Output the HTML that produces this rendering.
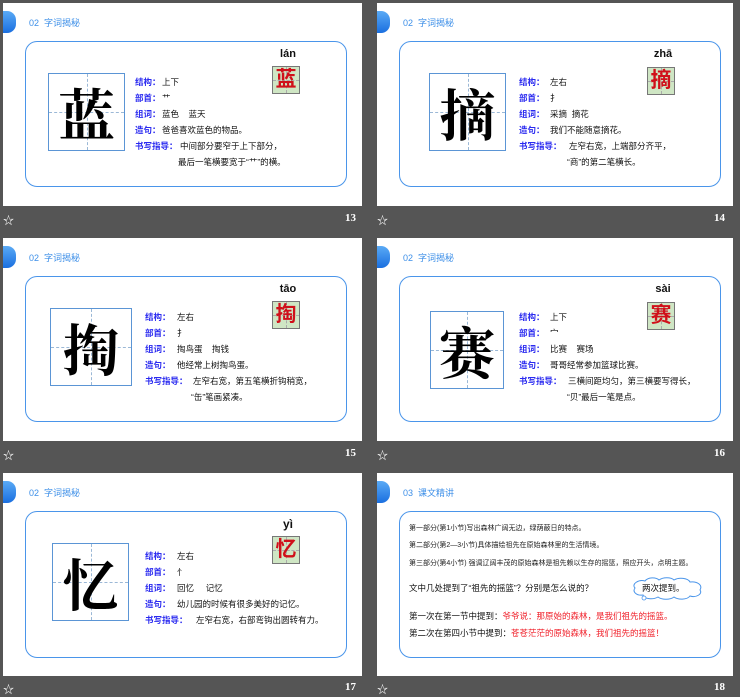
<!DOCTYPE html>
<html><head><meta charset="utf-8"><style>
*{margin:0;padding:0;box-sizing:border-box}
body{width:740px;height:696px;background:#555;position:relative;overflow:hidden;font-family:"Liberation Sans","Noto Sans CJK SC",sans-serif}
.s{position:absolute;width:359px;height:203px;background:#fff}
.tab{position:absolute;left:0;top:8px;width:13px;height:22px;background:linear-gradient(180deg,#5aaaf5,#1a6fe0);border-radius:0 9px 9px 0}
.ttl{position:absolute;left:26px;top:13px;font-size:9px;color:#3d8fe8;white-space:nowrap}
.box{position:absolute;left:22px;top:38px;width:322px;height:146px;border:1.5px solid #4a95ea;border-radius:12px}
.big{position:absolute;width:77px;height:78px;border:1.5px solid #5b95d5;background:#fff}
.big:before{content:"";position:absolute;left:50%;top:0;bottom:0;border-left:1px dashed #9bb8d6}
.big:after{content:"";position:absolute;top:50%;left:0;right:0;border-top:1px dashed #9bb8d6}
.big span{position:absolute;left:0;right:0;top:6px;text-align:center;font-family:"Noto Serif CJK SC",serif;font-weight:bold;font-size:56px;line-height:66px;color:#000;z-index:1}
.py{position:absolute;width:40px;text-align:center;font-weight:bold;font-size:11px;color:#111}
.sm{position:absolute;width:28px;height:28px;background:#cfe6c4;border:1px solid #777;text-align:center;color:#d0101a;font-size:21px;line-height:26px}
.sm:before{content:"";position:absolute;left:50%;top:0;bottom:0;border-left:1px dashed #aaa}
.sm:after{content:"";position:absolute;top:50%;left:0;right:0;border-top:1px dashed #aaa}
.sm b{position:relative;z-index:1;font-weight:bold}
.ln{position:absolute;font-size:8.5px;color:#111;white-space:nowrap;line-height:10px}
.lb{position:absolute;font-size:8.5px;color:#2a2af0;font-weight:bold;white-space:nowrap;line-height:10px}
.ft{position:absolute;color:#fff;font-size:11px}
.num{position:absolute;color:#fff;font-family:"Liberation Serif",serif;font-weight:bold;font-size:11px;text-align:right;width:30px}
.t{position:absolute;left:32px;font-size:7px;color:#222;white-space:nowrap}
.q{position:absolute;left:32px;font-size:8.5px;color:#111;white-space:nowrap}
.r{color:#f0202a}
</style></head><body>

<div class="s" style="left:3px;top:3px">
<div class="tab"></div><div class="ttl">02&nbsp;&nbsp;字词揭秘</div><div class="box"></div>
<div class="big" style="left:45px;top:70px"><span>蓝</span></div>
<div class="py" style="left:265px;top:45px">lán</div>
<div class="sm" style="left:269px;top:63px"><b>蓝</b></div>
<div class="lb" style="left:132px;top:74px">结构：</div><div class="ln" style="left:159px;top:74px">上下</div>
<div class="lb" style="left:132px;top:90px">部首：</div><div class="ln" style="left:159px;top:90px">艹</div>
<div class="lb" style="left:132px;top:106px">组词：</div><div class="ln" style="left:159px;top:106px">蓝色&nbsp;&nbsp;&nbsp;&nbsp;蓝天</div>
<div class="lb" style="left:132px;top:122px">造句：</div><div class="ln" style="left:159px;top:122px">爸爸喜欢蓝色的物品。</div>
<div class="lb" style="left:132px;top:138px">书写指导：</div><div class="ln" style="left:177px;top:138px">中间部分要窄于上下部分，</div>
<div class="ln" style="left:175px;top:154px">最后一笔横要宽于“艹”的横。</div>
</div>
<div class="ft" style="left:3px;top:212px">☆</div><div class="num" style="left:326px;top:212px">13</div>

<div class="s" style="left:377px;top:3px;width:356px">
<div class="tab"></div><div class="ttl">02&nbsp;&nbsp;字词揭秘</div><div class="box"></div>
<div class="big" style="left:52px;top:70px"><span>摘</span></div>
<div class="py" style="left:266px;top:45px">zhā</div>
<div class="sm" style="left:270px;top:64px"><b>摘</b></div>
<div class="lb" style="left:142px;top:74px">结构：</div><div class="ln" style="left:173px;top:74px">左右</div>
<div class="lb" style="left:142px;top:90px">部首：</div><div class="ln" style="left:173px;top:90px">扌</div>
<div class="lb" style="left:142px;top:106px">组词：</div><div class="ln" style="left:173px;top:106px">采摘&nbsp;&nbsp;摘花</div>
<div class="lb" style="left:142px;top:122px">造句：</div><div class="ln" style="left:173px;top:122px">我们不能随意摘花。</div>
<div class="lb" style="left:142px;top:138px">书写指导：</div><div class="ln" style="left:192px;top:138px">左窄右宽，上端部分齐平，</div>
<div class="ln" style="left:190px;top:154px">“商”的第二笔横长。</div>
</div>
<div class="ft" style="left:377px;top:212px">☆</div><div class="num" style="left:695px;top:212px">14</div>

<div class="s" style="left:3px;top:238px">
<div class="tab"></div><div class="ttl">02&nbsp;&nbsp;字词揭秘</div><div class="box"></div>
<div class="big" style="left:47px;top:70px;width:82px"><span>掏</span></div>
<div class="py" style="left:265px;top:45px">tāo</div>
<div class="sm" style="left:269px;top:63px"><b>掏</b></div>
<div class="lb" style="left:142px;top:74px">结构：</div><div class="ln" style="left:174px;top:74px">左右</div>
<div class="lb" style="left:142px;top:90px">部首：</div><div class="ln" style="left:174px;top:90px">扌</div>
<div class="lb" style="left:142px;top:106px">组词：</div><div class="ln" style="left:174px;top:106px">掏鸟蛋&nbsp;&nbsp;&nbsp;&nbsp;掏钱</div>
<div class="lb" style="left:142px;top:122px">造句：</div><div class="ln" style="left:174px;top:122px">他经常上树掏鸟蛋。</div>
<div class="lb" style="left:142px;top:138px">书写指导：</div><div class="ln" style="left:190px;top:138px">左窄右宽，第五笔横折钩稍宽，</div>
<div class="ln" style="left:188px;top:154px">“缶”笔画紧凑。</div>
</div>
<div class="ft" style="left:3px;top:447px">☆</div><div class="num" style="left:326px;top:447px">15</div>

<div class="s" style="left:377px;top:238px;width:356px">
<div class="tab"></div><div class="ttl">02&nbsp;&nbsp;字词揭秘</div><div class="box"></div>
<div class="big" style="left:53px;top:73px;width:74px"><span>赛</span></div>
<div class="py" style="left:266px;top:45px">sài</div>
<div class="sm" style="left:270px;top:64px"><b>赛</b></div>
<div class="lb" style="left:142px;top:74px">结构：</div><div class="ln" style="left:173px;top:74px">上下</div>
<div class="lb" style="left:142px;top:90px">部首：</div><div class="ln" style="left:173px;top:90px">宀</div>
<div class="lb" style="left:142px;top:106px">组词：</div><div class="ln" style="left:173px;top:106px">比赛&nbsp;&nbsp;&nbsp;&nbsp;赛场</div>
<div class="lb" style="left:142px;top:122px">造句：</div><div class="ln" style="left:173px;top:122px">哥哥经常参加篮球比赛。</div>
<div class="lb" style="left:142px;top:138px">书写指导：</div><div class="ln" style="left:191px;top:138px">三横间距均匀，第三横要写得长，</div>
<div class="ln" style="left:190px;top:154px">“贝”最后一笔是点。</div>
</div>
<div class="ft" style="left:377px;top:447px">☆</div><div class="num" style="left:695px;top:447px">16</div>

<div class="s" style="left:3px;top:473px">
<div class="tab"></div><div class="ttl">02&nbsp;&nbsp;字词揭秘</div><div class="box" style="top:38px;height:147px"></div>
<div class="big" style="left:49px;top:70px"><span>忆</span></div>
<div class="py" style="left:265px;top:44px;font-size:12px">yì</div>
<div class="sm" style="left:269px;top:63px"><b>忆</b></div>
<div class="lb" style="left:142px;top:78px">结构：</div><div class="ln" style="left:174px;top:78px">左右</div>
<div class="lb" style="left:142px;top:94px">部首：</div><div class="ln" style="left:174px;top:94px">忄</div>
<div class="lb" style="left:142px;top:110px">组词：</div><div class="ln" style="left:174px;top:110px">回忆&nbsp;&nbsp;&nbsp;&nbsp;&nbsp;记忆</div>
<div class="lb" style="left:142px;top:126px">造句：</div><div class="ln" style="left:174px;top:126px">幼儿园的时候有很多美好的记忆。</div>
<div class="lb" style="left:142px;top:142px">书写指导：</div><div class="ln" style="left:193px;top:142px">左窄右宽，右部弯钩出圆转有力。</div>
</div>
<div class="ft" style="left:3px;top:681px">☆</div><div class="num" style="left:326px;top:681px">17</div>

<div class="s" style="left:377px;top:473px;width:356px">
<div class="tab"></div><div class="ttl">03&nbsp;&nbsp;课文精讲</div><div class="box" style="top:38px;height:147px"></div>
<div class="t" style="top:50px">第一部分(第1小节)写出森林广阔无边，绿荫蔽日的特点。</div>
<div class="t" style="top:67px">第二部分(第2—3小节)具体描绘祖先在原始森林里的生活情境。</div>
<div class="t" style="top:85px">第三部分(第4小节) 强调辽阔丰茂的原始森林是祖先赖以生存的摇篮，照应开头，点明主题。</div>
<div class="q" style="top:109px">文中几处提到了“祖先的摇篮”？分别是怎么说的？</div>
<svg style="position:absolute;left:252px;top:103px" width="76" height="26" viewBox="0 0 76 26"><path d="M6 12c-4-4 4-9 10-7 3-4 11-4 14-1 4-3 12-3 15 0 5-3 14-2 16 2 7-1 13 3 10 8 3 4-4 8-10 6-3 4-12 4-16 1-4 3-12 3-16 0-5 3-14 2-15-2-6 1-11-3-8-7z" fill="#fff" stroke="#4a95ea" stroke-width="1"/><circle cx="15" cy="22" r="2" fill="#fff" stroke="#4a95ea" stroke-width=".8"/></svg>
<div class="q" style="left:265px;top:109px">两次提到。</div>
<div class="q" style="top:137px">第一次在第一节中提到：<span class="r">爷爷说：那原始的森林，是我们祖先的摇篮。</span></div>
<div class="q" style="top:154px">第二次在第四小节中提到：<span class="r">苍苍茫茫的原始森林，我们祖先的摇篮！</span></div>
</div>
<div class="ft" style="left:377px;top:681px">☆</div><div class="num" style="left:695px;top:681px">18</div>

</body></html>
